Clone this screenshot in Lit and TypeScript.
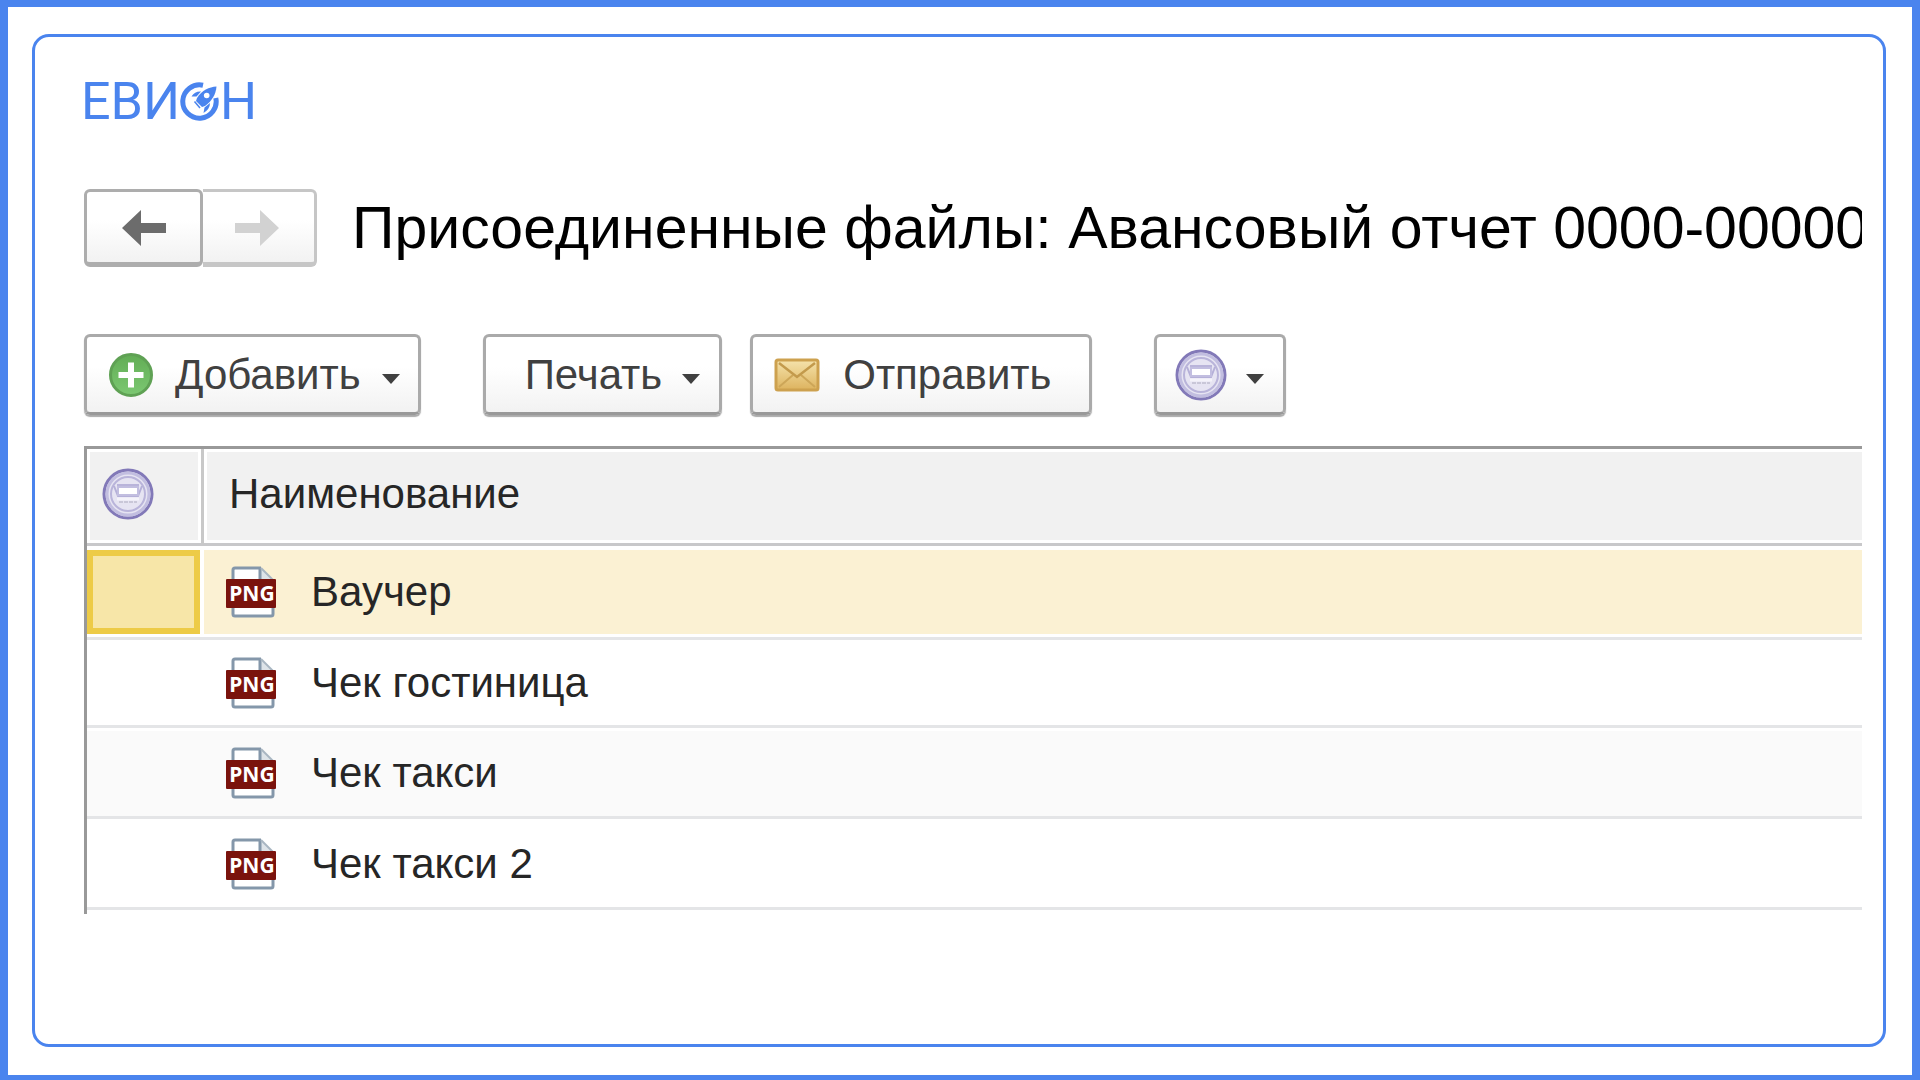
import { LitElement, html, css } from "lit";
import { customElement, property, state } from "lit/decorators.js";

const sealIcon = html`
  <svg class="seal" viewBox="0 0 52 52" aria-hidden="true">
    <circle cx="26" cy="26" r="24" fill="#e6e4f2" stroke="#8279b8" stroke-width="3" />
    <circle cx="26" cy="26" r="21" fill="none" stroke="#c2bee0" stroke-width="3" />
    <circle cx="26" cy="26" r="17" fill="#e6e4f2" stroke="#b9b4da" stroke-width="2" />
    <path d="M15 17h22" stroke="#b9b4da" stroke-width="2" />
    <path d="M12 18l4 10h20l4-10" stroke="#b5b0d8" stroke-width="2" fill="none" />
    <rect x="16" y="19" width="20" height="8" fill="#fff" stroke="#c2bee0" stroke-width="2" />
    <path d="M15 31h22" stroke="#f4f3fa" stroke-width="3" />
    <path d="M17 34h18" stroke="#c9c7d8" stroke-width="2" stroke-dasharray="4 1" />
  </svg>
`;

const caret = html`
  <svg class="caret" viewBox="0 0 18 10" aria-hidden="true"><path d="M0 0h18L9 10z" fill="#404040" /></svg>
`;

const plusIcon = html`
  <svg class="plus" viewBox="0 0 46 46" aria-hidden="true">
    <defs>
      <linearGradient id="green" x1="0" y1="0" x2="0" y2="1">
        <stop offset="0" stop-color="#62ad55" />
        <stop offset="1" stop-color="#7cc872" />
      </linearGradient>
    </defs>
    <circle cx="23" cy="23" r="20.5" fill="url(#green)" stroke="#5fa154" stroke-width="3" />
    <path d="M23 10.5v25M10.5 23h25" stroke="#fff" stroke-width="6" />
  </svg>
`;

const mailIcon = html`
  <svg class="mail" viewBox="0 0 46 34" aria-hidden="true">
    <defs>
      <linearGradient id="gold" x1="0" y1="0" x2="0" y2="1">
        <stop offset="0" stop-color="#f5e3ac" />
        <stop offset="1" stop-color="#ddb35e" />
      </linearGradient>
    </defs>
    <rect x="2" y="2" width="42" height="30" rx="2" fill="url(#gold)" stroke="#cda14f" stroke-width="3" />
    <path d="M5 29l14-12M41 29L27 17" stroke="#cda658" stroke-width="2" fill="none" />
    <path d="M5 5l18 14L41 5" stroke="#c39a4c" stroke-width="2.5" fill="none" />
  </svg>
`;

const pngIcon = html`
  <svg class="png" viewBox="0 0 52 52" role="img" aria-label="PNG">
    <path d="M10 2h26l12 12v34q0 2-2 2H10q-2 0-2-2V4q0-2 2-2z" fill="#fff" />
    <path d="M36 2v12h12z" fill="#dde3e8" />
    <path d="M8 14V4q0-2 2-2h26M8 42v6q0 2 2 2h36q2 0 2-2v-6M35 2v12" fill="none" stroke="#8497aa" stroke-width="3" />
    <path d="M36 2l12 12" stroke="#a9b6c2" stroke-width="2" />
    <rect x="1" y="13" width="50" height="29" rx="1" fill="#7a130d" />
    <text class="png-text" x="27" y="35" text-anchor="middle" fill="#fff">PNG</text>
  </svg>
`;

@customElement("evion-logo")
export class EvionLogo extends LitElement {
  static styles = css`
    :host {
      display: flex;
      align-items: center;
      height: 40px;
      margin-left: -3px;
      color: #4a84ee;
      font: 400 52px/40px Roboto, "Open Sans", sans-serif;
    }
    .orbit {
      width: 40px;
      height: 40px;
    }
  `;

  render() {
    return html`
      <span>ЕВИ</span>
      <svg class="orbit" viewBox="0 0 40 40" role="img" aria-label="О">
        <path d="M23 3.2A16.7 16.7 0 1 0 35.8 16" fill="none" stroke="currentColor" stroke-width="5" />
        <path d="M36.5 4.5C29 5 22 8 17 16L16 19L22 25L25 24C32 19 36 12 36.5 4.5z" fill="currentColor" />
        <circle cx="26.7" cy="13.5" r="2.8" fill="#fff" />
        <path d="M11.5 14.5Q15 9 21 9.5L16.5 14.5z M30 21Q30 27 23.5 31L24.5 25.5z" fill="currentColor" />
        <path d="M14.5 19.5l5.5 6.5" stroke="currentColor" stroke-width="1.5" />
      </svg>
      <span>Н</span>
    `;
  }
}

interface FileRow {
  name: string;
}

@customElement("file-table")
export class FileTable extends LitElement {
  @property({ attribute: false }) files: FileRow[] = [];
  @state() private selected = 0;

  static styles = css`
    :host {
      display: block;
      padding-bottom: 4px;
      border-top: 3px solid #999;
      border-left: 3px solid #999;
    }
    table {
      width: 100%;
      table-layout: fixed;
      border-collapse: separate;
      border-spacing: 0;
      color: #262626;
      font-size: 42px;
      line-height: 48px;
    }
    th,
    td {
      box-sizing: border-box;
      padding: 0;
      text-align: left;
      font-weight: 400;
      vertical-align: middle;
    }
    th {
      height: 97px;
      padding-bottom: 4px;
      border-bottom: 3px solid #c8c8ca;
      background: #f1f1f1;
      box-shadow: inset 3px 3px #fff, inset 0 -3px #fff;
    }
    .mark {
      width: 117px;
    }
    th.mark {
      padding-left: 15px;
      border-right: 3px solid #c8c8c8;
      box-shadow: inset 0 0 0 3px #fff;
    }
    th.name {
      padding-left: 25px;
    }
    td {
      height: 91px;
      padding-top: 2px;
      border-bottom: 3px solid #e4e5e7;
    }
    .striped td {
      background: #fafafa;
      box-shadow: inset 0 3px #fff;
    }
    .lead td {
      height: 94px;
      padding-top: 0;
    }
    .second td {
      height: 88px;
      padding-top: 0;
    }
    .cell {
      display: flex;
      align-items: center;
      gap: 34px;
      box-sizing: border-box;
      height: 84px;
      padding-left: 21px;
    }
    .chosen .cell {
      background: #fbf1d3;
    }
    .chosen .mark .cell {
      margin-right: 4px;
      border: 6px solid #edcb47;
      background: #f7e6a8;
    }
    .seal,
    .png {
      display: block;
      width: 52px;
      height: 52px;
    }
    .png-text {
      font: 700 21px "Noto Sans", sans-serif;
    }
  `;

  render() {
    return html`
      <table>
        <thead>
          <tr>
            <th class="mark" scope="col" aria-label="Подпись">${sealIcon}</th>
            <th class="name" scope="col">Наименование</th>
          </tr>
        </thead>
        <tbody>
          ${this.files.map(
            (file, i) => html`
              <tr
                class="${i === this.selected ? "chosen" : ""} ${["lead", "second", "striped"][i] ?? ""}"
                @click=${() => (this.selected = i)}
              >
                <td class="mark"><div class="cell"></div></td>
                <td class="name"><div class="cell">${pngIcon}<span>${file.name}</span></div></td>
              </tr>
            `,
          )}
        </tbody>
      </table>
    `;
  }
}

@customElement("app-root")
export class AppRoot extends LitElement {
  private files: FileRow[] = [
    { name: "Ваучер" },
    { name: "Чек гостиница" },
    { name: "Чек такси" },
    { name: "Чек такси 2" },
  ];

  static styles = css`
    :host {
      display: flex;
      box-sizing: border-box;
      min-height: 100vh;
      padding: 27px 26px 28px 24px;
      border: solid #4a84ee;
      border-width: 7px 8px 5px;
      background: #fff;
      font-family: "Liberation Sans", Arial, sans-serif;
    }
    .card {
      flex: 1;
      min-width: 0;
      box-sizing: border-box;
      padding: 45px 21px 45px 49px;
      border: 3px solid #4a84ee;
      border-radius: 17px;
    }
    .heading {
      display: flex;
      align-items: center;
      gap: 35px;
      margin-top: 67px;
    }
    .nav {
      display: flex;
      flex: none;
    }
    button {
      display: flex;
      align-items: center;
      box-sizing: border-box;
      margin: 0;
      border: 3px solid #aaa;
      border-radius: 6px;
      background: linear-gradient(#fff 40%, #f2f2f2);
      color: #404040;
      font: 42px/48px "Liberation Sans", Arial, sans-serif;
      white-space: nowrap;
    }
    .nav button {
      justify-content: center;
      width: 119px;
      height: 78px;
      padding: 2px 0 0;
      border-bottom-width: 5px;
      border-color: #adadad;
    }
    .nav .forward {
      width: 114px;
      padding-right: 3px;
      border-color: #c6c6c6;
      border-left: 0;
      border-radius: 0 6px 6px 0;
    }
    .arrow {
      width: 44px;
      height: 36px;
    }
    h1 {
      flex: 1;
      min-width: 0;
      margin: 0;
      overflow: hidden;
      color: #000;
      font-size: 59px;
      font-weight: 400;
      line-height: 76px;
      white-space: nowrap;
    }
    .toolbar {
      display: flex;
      gap: 62px;
      margin: 67px 0 31px;
    }
    .group {
      display: flex;
      gap: 28px;
    }
    .toolbar button {
      height: 81px;
      padding: 0 19px;
      border-bottom-color: #999;
      box-shadow: 0 2px 1px #aaa;
    }
    .toolbar .add {
      gap: 21px;
      padding: 0 18px 0 21px;
    }
    .toolbar .print {
      gap: 20px;
      padding-left: 39px;
    }
    .toolbar .send {
      gap: 23px;
      padding-right: 38px;
      padding-left: 21px;
    }
    .toolbar .stamp {
      gap: 19px;
      padding: 0 19px 0 18px;
    }
    .plus,
    .mail {
      width: 46px;
    }
    .seal {
      width: 52px;
    }
    .caret {
      width: 18px;
      margin-top: 8px;
    }
  `;

  render() {
    return html`
      <main class="card">
        <evion-logo></evion-logo>
        <header class="heading">
          <nav class="nav">
            <button class="back" type="button" aria-label="Назад">
              <svg class="arrow" viewBox="0 0 44 36"><path d="M0 18L19 0v13h25v10H19v13z" fill="#6c6c6c" /></svg>
            </button>
            <button class="forward" type="button" aria-label="Вперед">
              <svg class="arrow" viewBox="0 0 44 36"><path d="M44 18L25 0v13H0v10h25v13z" fill="#d2d2d2" /></svg>
            </button>
          </nav>
          <h1>Присоединенные файлы: Авансовый отчет 0000-00000</h1>
        </header>
        <div class="toolbar">
          <button class="add" type="button">${plusIcon}<span>Добавить</span>${caret}</button>
          <div class="group">
            <button class="print" type="button"><span>Печать</span>${caret}</button>
            <button class="send" type="button">${mailIcon}<span>Отправить</span></button>
          </div>
          <button class="stamp" type="button" aria-label="Подпись">${sealIcon}${caret}</button>
        </div>
        <file-table .files=${this.files}></file-table>
      </main>
    `;
  }
}
